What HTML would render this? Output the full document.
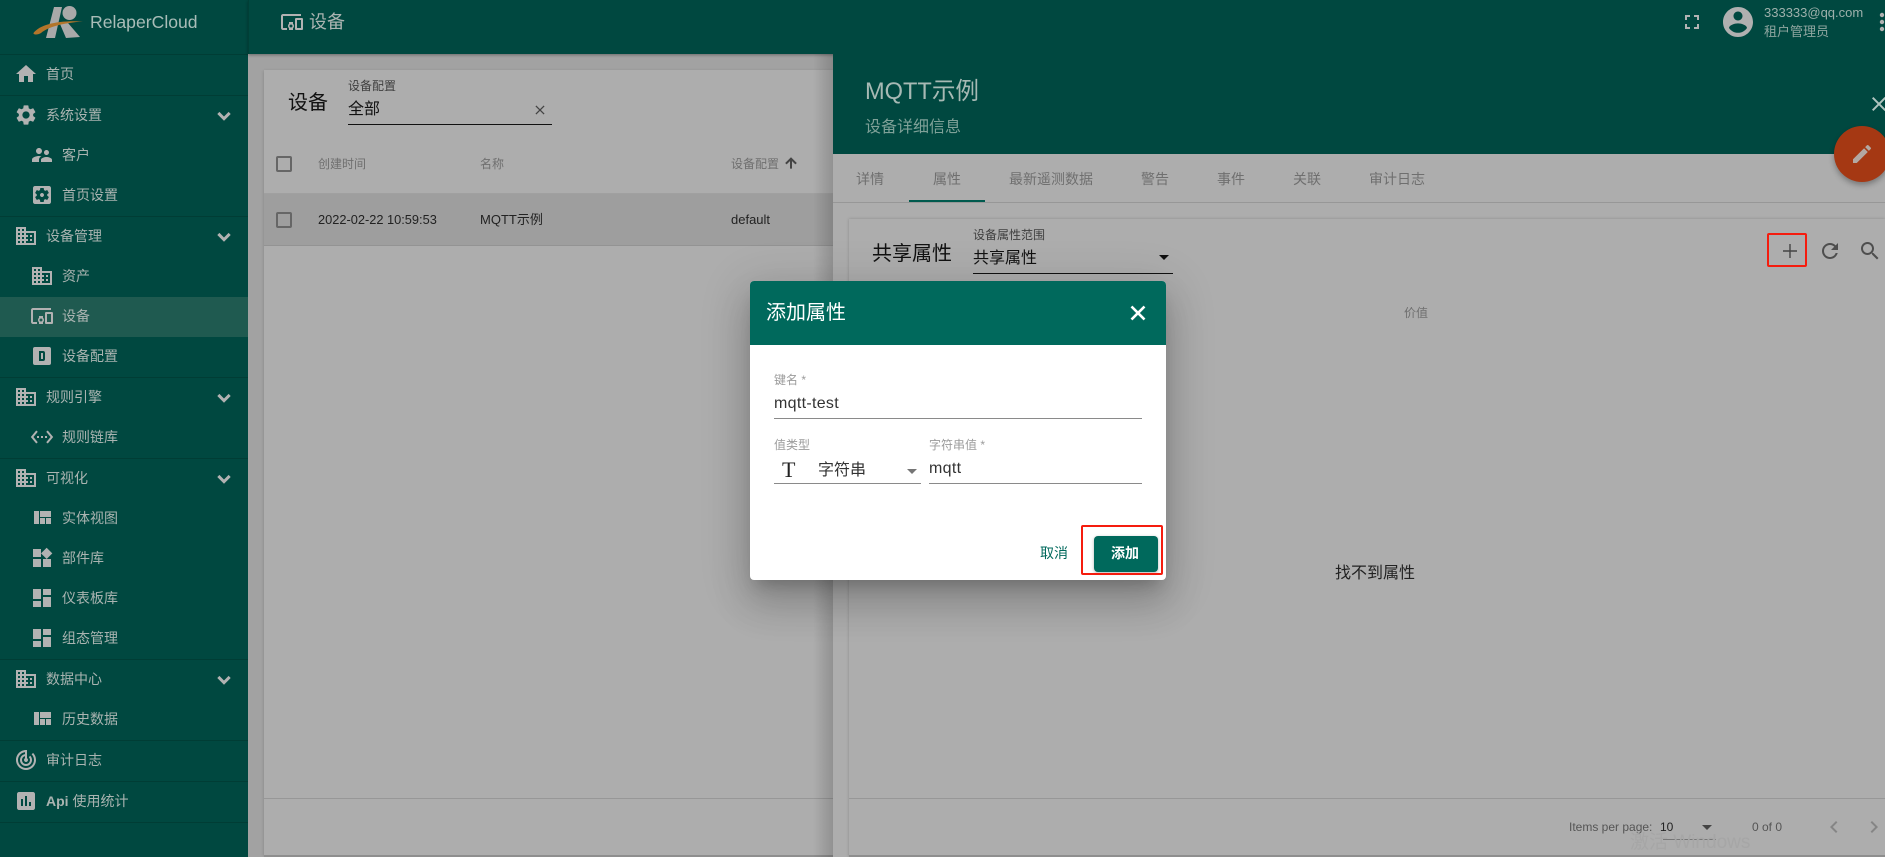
<!DOCTYPE html>
<html lang="zh"><head><meta charset="utf-8"><title>设备</title>
<style>
html,body{margin:0;padding:0;width:1885px;height:857px;overflow:hidden;background:#a2a2a2}
body{position:relative;font-family:"Liberation Sans","Noto Sans CJK SC",sans-serif;font-size:14px;color:#111}
div,span,svg{position:absolute}
.t{line-height:20px;height:20px;white-space:nowrap}
svg{fill:currentColor;overflow:visible}
#side{left:0;top:0;width:248px;height:857px;background:#004840;color:#aab4b1}
#side svg{color:#b2b2b2}
.sep{left:0;width:248px;height:1px;background:#003d35}
.lab{font-size:12px;color:#6f6f6f}
.box{width:12px;height:12px;border:2px solid #666;border-radius:2px}
</style></head><body>

<!-- main page -->
<div style="left:248px;top:54px;width:586px;height:803px;background:#a2a2a2"></div>
<div style="left:264px;top:70px;width:569px;height:785px;background:#adadad;box-shadow:0 1px 3px rgba(0,0,0,.2)"></div>
<span class="t" style="left:288px;top:93px;font-size:20px">设备</span>
<span class="t lab" style="left:348px;top:76px;color:#3f3f3f">设备配置</span>
<span class="t" style="left:348px;top:100px;font-size:16px">全部</span>
<svg style="left:534px;top:104px;color:#444" width="12" height="12" viewBox="0 0 24 24"><path d="M19 6.41L17.59 5 12 10.59 6.41 5 5 6.41 10.59 12 5 17.59 6.41 19 12 13.41 17.59 19 19 17.59 13.41 12z" transform="translate(-3.6 -3.6) scale(1.3)"/></svg>
<div style="left:348px;top:124px;width:204px;height:1px;background:#111"></div>
<div class="box" style="left:276px;top:156px"></div>
<span class="t lab" style="left:318px;top:154px">创建时间</span>
<span class="t lab" style="left:480px;top:154px">名称</span>
<span class="t lab" style="left:731px;top:154px">设备配置</span>
<svg style="left:783px;top:155px;color:#444" width="16" height="16" viewBox="0 0 24 24"><path d="M4 12l1.41 1.41L11 7.83V20h2V7.83l5.58 5.59L20 12l-8-8-8 8z" stroke="currentColor"/></svg>
<div style="left:264px;top:193px;width:569px;height:53px;background:#9e9e9e;border-top:1px solid #a0a0a0;border-bottom:1px solid #939393;box-sizing:border-box"></div>
<div class="box" style="left:276px;top:212px"></div>
<span class="t" style="left:318px;top:210px;font-size:12.8px;color:#222">2022-02-22 10:59:53</span>
<span class="t" style="left:480px;top:210px;font-size:13px;color:#222">MQTT示例</span>
<span class="t" style="left:731px;top:210px;font-size:13px;color:#222">default</span>
<div style="left:264px;top:798px;width:569px;height:1px;background:#979797"></div>
<div style="left:264px;top:855px;width:569px;height:2px;background:#8e8e8e"></div>
<div style="left:813px;top:54px;width:20px;height:803px;background:linear-gradient(to right,rgba(0,0,0,0),rgba(0,0,0,.16))"></div>

<!-- sidebar -->
<div id="side">
<svg style="left:0;top:0" width="100" height="54" viewBox="0 0 100 54">
<path d="M54 7h8l-7 31h-9z" fill="#a9a9a9"/>
<circle cx="69.5" cy="13" r="7" fill="#a9a9a9"/>
<path d="M60 24l8-1 12 14-14 1z" fill="#a9a9a9"/>
<path d="M33.5 33C40 24 60 20 83 21.5 62 23 48 27 41 33 38 35 33 35 33.500 33z" fill="#b3752a"/>
</svg>
<span class="t" style="left:90px;top:12px;font-size:17.6px;color:#a9bdb8">RelaperCloud</span>
<div class="sep" style="top:54px"></div><div class="sep" style="top:95px"></div><div class="sep" style="top:216px"></div><div class="sep" style="top:377px"></div><div class="sep" style="top:458px"></div><div class="sep" style="top:659px"></div><div class="sep" style="top:740px"></div><div class="sep" style="top:781px"></div><div class="sep" style="top:822px"></div>
<div style="left:0;top:297px;width:248px;height:40px;background:#1f5a50"></div>

<svg style="left:14px;top:62px" width="24" height="24" viewBox="0 0 24 24"><path d="M10 20v-6h4v6h5v-8h3L12 3 2 12h3v8z"/></svg>
<span class="t" style="left:46px;top:64px">首页</span>

<svg style="left:14px;top:103px" width="24" height="24" viewBox="0 0 24 24"><path d="M19.14 12.94c.04-.3.06-.61.06-.94 0-.32-.02-.64-.07-.94l2.03-1.58c.18-.14.23-.41.12-.61l-1.92-3.32c-.12-.22-.37-.29-.59-.22l-2.39.96c-.5-.38-1.03-.7-1.62-.94l-.36-2.54c-.04-.24-.24-.41-.48-.41h-3.84c-.24 0-.43.17-.47.41l-.36 2.54c-.59.24-1.13.57-1.62.94l-2.39-.96c-.22-.08-.47 0-.59.22L2.74 8.87c-.12.21-.08.47.12.61l2.03 1.58c-.05.3-.09.63-.09.94s.02.64.07.94l-2.03 1.58c-.18.14-.23.41-.12.61l1.92 3.32c.12.22.37.29.59.22l2.39-.96c.5.38 1.03.7 1.62.94l.36 2.54c.05.24.24.41.48.41h3.84c.24 0 .44-.17.47-.41l.36-2.54c.59-.24 1.13-.56 1.62-.94l2.39.96c.22.08.47 0 .59-.22l1.92-3.32c.12-.22.07-.47-.12-.61l-2.01-1.58zM12 15.6c-1.98 0-3.6-1.62-3.6-3.6s1.62-3.6 3.6-3.6 3.6 1.62 3.6 3.6-1.62 3.6-3.6 3.6z"/></svg>
<span class="t" style="left:46px;top:105px">系统设置</span>
<svg style="left:212px;top:104px" width="24" height="24" viewBox="0 0 24 24"><path d="M16.59 8.59L12 13.17 7.41 8.59 6 10l6 6 6-6z" stroke="currentColor" stroke-width="1"/></svg>

<svg style="left:30px;top:143px" width="24" height="24" viewBox="0 0 24 24"><path d="M16.500 12c1.38 0 2.49-1.12 2.49-2.5S17.88 7 16.5 7C15.12 7 14 8.12 14 9.5s1.12 2.5 2.5 2.5zM9 11c1.66 0 2.99-1.34 2.99-3S10.66 5 9 5C7.34 5 6 6.34 6 8s1.34 3 3 3zm7.5 3c-1.83 0-5.5.92-5.5 2.75V19h11v-2.25c0-1.83-3.67-2.75-5.5-2.75zM9 13c-2.33 0-7 1.17-7 3.5V19h7v-2.25c0-.85.33-2.34 2.37-3.47C10.5 13.1 9.66 13 9 13z"/></svg>
<span class="t" style="left:62px;top:145px">客户</span>

<svg style="left:30px;top:183px" width="24" height="24" viewBox="0 0 24 24"><path d="M12 10c-1.1 0-2 .9-2 2s.9 2 2 2 2-.9 2-2-.9-2-2-2zm7-7H5c-1.11 0-2 .9-2 2v14c0 1.1.89 2 2 2h14c1.11 0 2-.9 2-2V5c0-1.1-.89-2-2-2zm-1.75 9c0 .23-.02.46-.05.68l1.48 1.16c.13.11.17.3.08.45l-1.4 2.42c-.09.15-.27.21-.43.15l-1.74-.7c-.36.28-.76.51-1.18.69l-.26 1.85c-.03.17-.18.3-.35.3h-2.8c-.17 0-.32-.13-.35-.29l-.26-1.85c-.43-.18-.82-.41-1.18-.69l-1.74.7c-.16.06-.34 0-.43-.15l-1.4-2.42c-.09-.15-.05-.34.08-.45l1.48-1.16c-.03-.23-.05-.46-.05-.69 0-.23.02-.46.05-.68l-1.48-1.16c-.13-.11-.17-.3-.08-.45l1.4-2.42c.09-.15.27-.21.43-.15l1.74.7c.36-.28.76-.51 1.18-.69l.26-1.85c.03-.17.18-.3.35-.3h2.8c.17 0 .32.13.35.29l.26 1.85c.43.18.82.41 1.18.69l1.74-.7c.16-.06.34 0 .43.15l1.4 2.42c.09.15.05.34-.08.45l-1.48 1.16c.03.23.05.46.05.69z"/></svg>
<span class="t" style="left:62px;top:185px">首页设置</span>

<svg style="left:14px;top:224px" width="24" height="24" viewBox="0 0 24 24"><path d="M12 7V3H2v18h20V7H12zM6 19H4v-2h2v2zm0-4H4v-2h2v2zm0-4H4V9h2v2zm0-4H4V5h2v2zm4 12H8v-2h2v2zm0-4H8v-2h2v2zm0-4H8V9h2v2zm0-4H8V5h2v2zm10 12h-8v-2h2v-2h-2v-2h2v-2h-2V9h8v10zm-2-8h-2v2h2v-2zm0 4h-2v2h2v-2z"/></svg>
<span class="t" style="left:46px;top:226px">设备管理</span>
<svg style="left:212px;top:225px" width="24" height="24" viewBox="0 0 24 24"><path d="M16.59 8.59L12 13.17 7.41 8.59 6 10l6 6 6-6z" stroke="currentColor" stroke-width="1"/></svg>

<svg style="left:30px;top:264px" width="24" height="24" viewBox="0 0 24 24"><path d="M12 7V3H2v18h20V7H12zM6 19H4v-2h2v2zm0-4H4v-2h2v2zm0-4H4V9h2v2zm0-4H4V5h2v2zm4 12H8v-2h2v2zm0-4H8v-2h2v2zm0-4H8V9h2v2zm0-4H8V5h2v2zm10 12h-8v-2h2v-2h-2v-2h2v-2h-2V9h8v10zm-2-8h-2v2h2v-2zm0 4h-2v2h2v-2z"/></svg>
<span class="t" style="left:62px;top:266px">资产</span>

<svg style="left:30px;top:304px" width="24" height="24" viewBox="0 0 24 24"><path d="M3 6h18V4H3c-1.1 0-2 .9-2 2v12c0 1.1.9 2 2 2h4v-2H3V6zm10 6H9v1.78c-.61.55-1 1.33-1 2.22s.39 1.67 1 2.22V20h4v-1.78c.61-.55 1-1.34 1-2.22s-.39-1.67-1-2.22V12zm-2 5.5c-.83 0-1.5-.67-1.5-1.5s.67-1.5 1.5-1.5 1.5.67 1.5 1.5-.67 1.5-1.5 1.5zM22 8h-6c-.5 0-1 .5-1 1v10c0 .5.5 1 1 1h6c.5 0 1-.5 1-1V9c0-.5-.5-1-1-1zm-1 10h-4v-8h4v8z"/></svg>
<span class="t" style="left:62px;top:306px">设备</span>

<svg style="left:30px;top:344px" width="24" height="24" viewBox="0 0 24 24"><path fill-rule="evenodd" d="M5 3h14a2 2 0 0 1 2 2v14a2 2 0 0 1-2 2H5a2 2 0 0 1-2-2V5a2 2 0 0 1 2-2zm4 4v10h4a2 2 0 0 0 2-2V9a2 2 0 0 0-2-2H9zm2 2h2v6h-2V9z"/></svg>
<span class="t" style="left:62px;top:346px">设备配置</span>

<svg style="left:14px;top:385px" width="24" height="24" viewBox="0 0 24 24"><path d="M12 7V3H2v18h20V7H12zM6 19H4v-2h2v2zm0-4H4v-2h2v2zm0-4H4V9h2v2zm0-4H4V5h2v2zm4 12H8v-2h2v2zm0-4H8v-2h2v2zm0-4H8V9h2v2zm0-4H8V5h2v2zm10 12h-8v-2h2v-2h-2v-2h2v-2h-2V9h8v10zm-2-8h-2v2h2v-2zm0 4h-2v2h2v-2z"/></svg>
<span class="t" style="left:46px;top:387px">规则引擎</span>
<svg style="left:212px;top:386px" width="24" height="24" viewBox="0 0 24 24"><path d="M16.59 8.59L12 13.17 7.41 8.59 6 10l6 6 6-6z" stroke="currentColor" stroke-width="1"/></svg>

<svg style="left:30px;top:425px" width="24" height="24" viewBox="0 0 24 24"><path d="M7.77 6.76L6.23 5.48.82 12l5.41 6.52 1.54-1.28L3.42 12l4.35-5.24zM7 13h2v-2H7v2zm10-2h-2v2h2v-2zm-6 2h2v-2h-2v2zm6.77-7.52l-1.54 1.28L20.58 12l-4.35 5.24 1.54 1.28L23.18 12l-5.41-6.52z"/></svg>
<span class="t" style="left:62px;top:427px">规则链库</span>

<svg style="left:14px;top:466px" width="24" height="24" viewBox="0 0 24 24"><path d="M12 7V3H2v18h20V7H12zM6 19H4v-2h2v2zm0-4H4v-2h2v2zm0-4H4V9h2v2zm0-4H4V5h2v2zm4 12H8v-2h2v2zm0-4H8v-2h2v2zm0-4H8V9h2v2zm0-4H8V5h2v2zm10 12h-8v-2h2v-2h-2v-2h2v-2h-2V9h8v10zm-2-8h-2v2h2v-2zm0 4h-2v2h2v-2z"/></svg>
<span class="t" style="left:46px;top:468px">可视化</span>
<svg style="left:212px;top:467px" width="24" height="24" viewBox="0 0 24 24"><path d="M16.59 8.59L12 13.17 7.41 8.59 6 10l6 6 6-6z" stroke="currentColor" stroke-width="1"/></svg>

<svg style="left:30px;top:506px" width="24" height="24" viewBox="0 0 24 24"><path d="M10 18h5v-6h-5v6zm-6 0h5V5H4v13zm12 0h5v-6h-5v6zM10 5v6h11V5H10z"/></svg>
<span class="t" style="left:62px;top:508px">实体视图</span>

<svg style="left:30px;top:546px" width="24" height="24" viewBox="0 0 24 24"><path d="M13 13v8h8v-8h-8zM3 21h8v-8H3v8zM3 3v8h8V3H3zm13.66-1.31L11 7.34 16.66 13l5.66-5.66-5.66-5.65z"/></svg>
<span class="t" style="left:62px;top:548px">部件库</span>

<svg style="left:30px;top:586px" width="24" height="24" viewBox="0 0 24 24"><path d="M3 13h8V3H3v10zm0 8h8v-6H3v6zm10 0h8V11h-8v10zm0-18v6h8V3h-8z"/></svg>
<span class="t" style="left:62px;top:588px">仪表板库</span>

<svg style="left:30px;top:626px" width="24" height="24" viewBox="0 0 24 24"><path d="M3 13h8V3H3v10zm0 8h8v-6H3v6zm10 0h8V11h-8v10zm0-18v6h8V3h-8z"/></svg>
<span class="t" style="left:62px;top:628px">组态管理</span>

<svg style="left:14px;top:667px" width="24" height="24" viewBox="0 0 24 24"><path d="M12 7V3H2v18h20V7H12zM6 19H4v-2h2v2zm0-4H4v-2h2v2zm0-4H4V9h2v2zm0-4H4V5h2v2zm4 12H8v-2h2v2zm0-4H8v-2h2v2zm0-4H8V9h2v2zm0-4H8V5h2v2zm10 12h-8v-2h2v-2h-2v-2h2v-2h-2V9h8v10zm-2-8h-2v2h2v-2zm0 4h-2v2h2v-2z"/></svg>
<span class="t" style="left:46px;top:669px">数据中心</span>
<svg style="left:212px;top:668px" width="24" height="24" viewBox="0 0 24 24"><path d="M16.59 8.59L12 13.17 7.41 8.59 6 10l6 6 6-6z" stroke="currentColor" stroke-width="1"/></svg>

<svg style="left:30px;top:707px" width="24" height="24" viewBox="0 0 24 24"><path d="M10 18h5v-6h-5v6zm-6 0h5V5H4v13zm12 0h5v-6h-5v6zM10 5v6h11V5H10z"/></svg>
<span class="t" style="left:62px;top:709px">历史数据</span>

<svg style="left:14px;top:748px" width="24" height="24" viewBox="0 0 24 24"><path d="M19.07 4.93l-1.41 1.41C19.1 7.79 20 9.79 20 12c0 4.42-3.58 8-8 8s-8-3.58-8-8c0-4.08 3.05-7.44 7-7.93v2.02C8.16 6.57 6 9.03 6 12c0 3.31 2.69 6 6 6s6-2.69 6-6c0-1.66-.67-3.16-1.76-4.24l-1.41 1.41C15.55 9.9 16 10.9 16 12c0 2.21-1.79 4-4 4s-4-1.79-4-4c0-1.86 1.28-3.41 3-3.86v2.14c-.6.35-1 .98-1 1.72 0 1.1.9 2 2 2s2-.9 2-2c0-.74-.4-1.38-1-1.72V2h-1C6.48 2 2 6.48 2 12s4.48 10 10 10 10-4.48 10-10c0-2.76-1.12-5.26-2.93-7.07z"/></svg>
<span class="t" style="left:46px;top:750px">审计日志</span>

<svg style="left:14px;top:789px" width="24" height="24" viewBox="0 0 24 24"><path d="M19 3H5c-1.1 0-2 .9-2 2v14c0 1.1.9 2 2 2h14c1.1 0 2-.9 2-2V5c0-1.1-.9-2-2-2zM9 17H7v-7h2v7zm4 0h-2V7h2v10zm4 0h-2v-4h2v4z"/></svg>
<span class="t" style="left:46px;top:791px"><b>Api</b> 使用统计</span>
</div>

<!-- top bar -->
<div style="left:248px;top:0;width:1637px;height:54px;background:#004840;border-left:1px solid #003f36;box-sizing:border-box;box-shadow:0 1px 3px rgba(0,0,0,.35)"></div>
<svg style="left:280px;top:10px;color:#b2b2b2" width="24" height="24" viewBox="0 0 24 24"><path d="M3 6h18V4H3c-1.1 0-2 .9-2 2v12c0 1.1.9 2 2 2h4v-2H3V6zm10 6H9v1.78c-.61.55-1 1.33-1 2.22s.39 1.67 1 2.22V20h4v-1.78c.61-.55 1-1.34 1-2.22s-.39-1.67-1-2.22V12zm-2 5.5c-.83 0-1.5-.67-1.5-1.5s.67-1.5 1.5-1.5 1.5.67 1.5 1.5-.67 1.5-1.5 1.5zM22 8h-6c-.5 0-1 .5-1 1v10c0 .5.5 1 1 1h6c.5 0 1-.5 1-1V9c0-.5-.5-1-1-1zm-1 10h-4v-8h4v8z"/></svg>
<span class="t" style="left:309px;top:12px;font-size:18px;color:#aab4b1">设备</span>
<svg style="left:1680px;top:10px;color:#b2b2b2" width="24" height="24" viewBox="0 0 24 24"><path d="M7 14H5v5h5v-2H7v-3zm-2-4h2V7h3V5H5v5zm12 7h-3v2h5v-5h-2v3zM14 5v2h3v3h2V5h-5z"/></svg>
<svg style="left:1720px;top:4px;color:#b0b0b0" width="36" height="36" viewBox="0 0 24 24"><path d="M12 2C6.48 2 2 6.48 2 12s4.48 10 10 10 10-4.48 10-10S17.52 2 12 2zm0 3c1.66 0 3 1.34 3 3s-1.34 3-3 3-3-1.34-3-3 1.34-3 3-3zm0 14.2c-2.5 0-4.71-1.28-6-3.22.03-1.99 4-3.08 6-3.08 1.99 0 5.97 1.09 6 3.08-1.29 1.94-3.5 3.22-6 3.22z"/></svg>
<span class="t" style="left:1764px;top:3px;font-size:13px;color:#9db0ab">333333@qq.com</span>
<span class="t" style="left:1764px;top:22px;font-size:13px;color:#8fa6a0">租户管理员</span>
<svg style="left:1874px;top:10px;color:#b2b2b2" width="24" height="24" viewBox="0 0 24 24"><circle cx="8" cy="5" r="2.2"/><circle cx="8" cy="12" r="2.2"/><circle cx="8" cy="19" r="2.2"/></svg>

<!-- right panel -->
<div style="left:833px;top:54px;width:1052px;height:803px;background:#adadad"></div>
<div style="left:833px;top:54px;width:1052px;height:100px;background:#004840"></div>
<span class="t" style="left:865px;top:82px;font-size:23.6px;color:#a7b9b4">MQTT示例</span>
<span class="t" style="left:865px;top:118px;font-size:16px;color:#7fa198">设备详细信息</span>
<svg style="left:1867px;top:92px;color:#b0c4bf" width="24" height="24" viewBox="0 0 24 24"><path d="M19 6.41L17.59 5 12 10.59 6.41 5 5 6.41 10.59 12 5 17.59 6.41 19 12 13.41 17.59 19 19 17.59 13.41 12z"/></svg>
<span class="t" style="left:856px;top:169px;color:#6f6f6f">详情</span>
<span class="t" style="left:933px;top:169px;color:#6f6f6f">属性</span>
<span class="t" style="left:1009px;top:169px;color:#6f6f6f">最新遥测数据</span>
<span class="t" style="left:1141px;top:169px;color:#6f6f6f">警告</span>
<span class="t" style="left:1217px;top:169px;color:#6f6f6f">事件</span>
<span class="t" style="left:1293px;top:169px;color:#6f6f6f">关联</span>
<span class="t" style="left:1369px;top:169px;color:#6f6f6f">审计日志</span>
<div style="left:909px;top:200px;width:76px;height:2px;background:#005a4e"></div>
<div style="left:833px;top:202px;width:1052px;height:1px;background:#979797"></div>

<div style="left:849px;top:219px;width:1036px;height:638px;background:#adadad;box-shadow:0 0 3px rgba(0,0,0,.2)"></div>
<span class="t" style="left:872px;top:244px;font-size:20px">共享属性</span>
<span class="t lab" style="left:973px;top:225px;color:#3f3f3f">设备属性范围</span>
<span class="t" style="left:973px;top:249px;font-size:16px">共享属性</span>
<div style="left:1159px;top:255px;width:0;height:0;border-left:5px solid transparent;border-right:5px solid transparent;border-top:5px solid #111"></div>
<div style="left:973px;top:273px;width:200px;height:1px;background:#111"></div>
<div style="left:1767px;top:233px;width:36px;height:30px;border:2px solid #f51c0e;border-radius:2px"></div>
<svg style="left:1778px;top:239px;color:#444" width="24" height="24" viewBox="0 0 24 24"><path d="M19 12.7h-6.3V19h-1.4v-6.3H5v-1.400h6.3V5h1.4v6.3H19z"/></svg>
<svg style="left:1818px;top:239px;color:#4e4e4e" width="24" height="24" viewBox="0 0 24 24"><path d="M17.65 6.35C16.2 4.9 14.21 4 12 4c-4.42 0-7.99 3.58-7.99 8s3.57 8 7.99 8c3.73 0 6.84-2.55 7.73-6h-2.08c-.82 2.33-3.04 4-5.65 4-3.31 0-6-2.69-6-6s2.69-6 6-6c1.66 0 3.14.69 4.22 1.78L13 11h7V4l-2.35 2.35z"/></svg>
<svg style="left:1858px;top:239px;color:#4e4e4e" width="24" height="24" viewBox="0 0 24 24"><path d="M15.5 14h-.79l-.28-.27C15.41 12.59 16 11.11 16 9.5 16 5.91 13.09 3 9.5 3S3 5.91 3 9.5 5.91 16 9.5 16c1.61 0 3.09-.59 4.23-1.57l.27.28v.79l5 4.99L20.49 19l-4.99-5zm-6 0C7.01 14 5 11.99 5 9.5S7.01 5 9.5 5 14 7.01 14 9.5 11.99 14 9.5 14z"/></svg>
<span class="t lab" style="left:1404px;top:303px">价值</span>
<span class="t" style="left:1335px;top:564px;font-size:16px;color:#222">找不到属性</span>
<div style="left:849px;top:798px;width:1036px;height:1px;background:#979797"></div>
<span class="t" style="left:1569px;top:817px;font-size:12px;color:#555">Items per page:</span>
<span class="t" style="left:1660px;top:817px;font-size:12px;color:#222">10</span>
<div style="left:1702px;top:825px;width:0;height:0;border-left:5px solid transparent;border-right:5px solid transparent;border-top:5px solid #444"></div>
<div style="left:1663px;top:839px;width:53px;height:1px;background:#777"></div>
<span class="t" style="left:1752px;top:817px;font-size:12px;color:#555">0 of 0</span>
<svg style="left:1822px;top:815px;color:#858585" width="24" height="24" viewBox="0 0 24 24"><path d="M15.41 7.41L14 6l-6 6 6 6 1.41-1.41L10.83 12z"/></svg>
<svg style="left:1862px;top:815px;color:#858585" width="24" height="24" viewBox="0 0 24 24"><path d="M10 6L8.59 7.41 13.17 12l-4.58 4.59L10 18l6-6z"/></svg>
<span class="t" style="left:1630px;top:833px;font-size:19px;color:#a6a6a6">激活 Windows</span>
<div style="left:849px;top:855px;width:1036px;height:2px;background:#8e8e8e"></div>

<!-- FAB -->
<div style="left:1834px;top:126px;width:56px;height:56px;border-radius:50%;background:#a53813;box-shadow:0 3px 6px rgba(0,0,0,.3)"></div>
<svg style="left:1850px;top:142px;color:#b3a8a2" width="24" height="24" viewBox="0 0 24 24"><path d="M3 17.25V21h3.75L17.81 9.94l-3.75-3.75L3 17.25zM20.71 7.04c.39-.39.39-1.02 0-1.41l-2.34-2.34c-.39-.39-1.02-.39-1.41 0l-1.83 1.83 3.75 3.75 1.83-1.83z"/></svg>

<!-- dialog -->
<div style="left:750px;top:281px;width:416px;height:299px;background:#fff;border-radius:4px;box-shadow:0 11px 15px -7px rgba(0,0,0,.2),0 24px 38px 3px rgba(0,0,0,.14),0 9px 46px 8px rgba(0,0,0,.12)"></div>
<div style="left:750px;top:281px;width:416px;height:64px;background:#00695c;border-radius:4px 4px 0 0"></div>
<span class="t" style="left:766px;top:303px;font-size:20px;color:#fff">添加属性</span>
<svg style="left:1126px;top:301px;color:#fff" width="24" height="24" viewBox="0 0 24 24"><path d="M19 6.41L17.59 5 12 10.59 6.41 5 5 6.41 10.59 12 5 17.59 6.41 19 12 13.41 17.59 19 19 17.59 13.41 12z" stroke="#fff" stroke-width=".6"/></svg>
<span class="t" style="left:774px;top:370px;font-size:12px;color:#9b9b9b">键名 *</span>
<span class="t" style="left:774px;top:394px;font-size:16px;color:#333;letter-spacing:.3px">mqtt-test</span>
<div style="left:774px;top:418px;width:368px;height:1px;background:#8a8a8a"></div>
<span class="t" style="left:774px;top:435px;font-size:12px;color:#9b9b9b">值类型</span>
<span class="t" style="left:782px;top:460px;font-size:22px;font-family:'Liberation Serif',serif;color:#222">T</span>
<span class="t" style="left:818px;top:461px;font-size:16px;color:#333">字符串</span>
<div style="left:907px;top:469px;width:0;height:0;border-left:5px solid transparent;border-right:5px solid transparent;border-top:5px solid #757575"></div>
<div style="left:774px;top:483px;width:147px;height:1px;background:#8a8a8a"></div>
<span class="t" style="left:929px;top:435px;font-size:12px;color:#9b9b9b">字符串值 *</span>
<span class="t" style="left:929px;top:459px;font-size:16px;color:#333;letter-spacing:.3px">mqtt</span>
<div style="left:929px;top:483px;width:213px;height:1px;background:#8a8a8a"></div>
<span class="t" style="left:1040px;top:543px;color:#00695c">取消</span>
<div style="left:1094px;top:536px;width:64px;height:36px;background:#00695c;border-radius:4px;box-shadow:0 1px 3px rgba(0,0,0,.3)"></div>
<span class="t" style="left:1111px;top:543px;color:#fff;font-weight:700">添加</span>
<div style="left:1081px;top:525px;width:78px;height:46px;border:2px solid #f51c0e;border-radius:2px"></div>
</body></html>
